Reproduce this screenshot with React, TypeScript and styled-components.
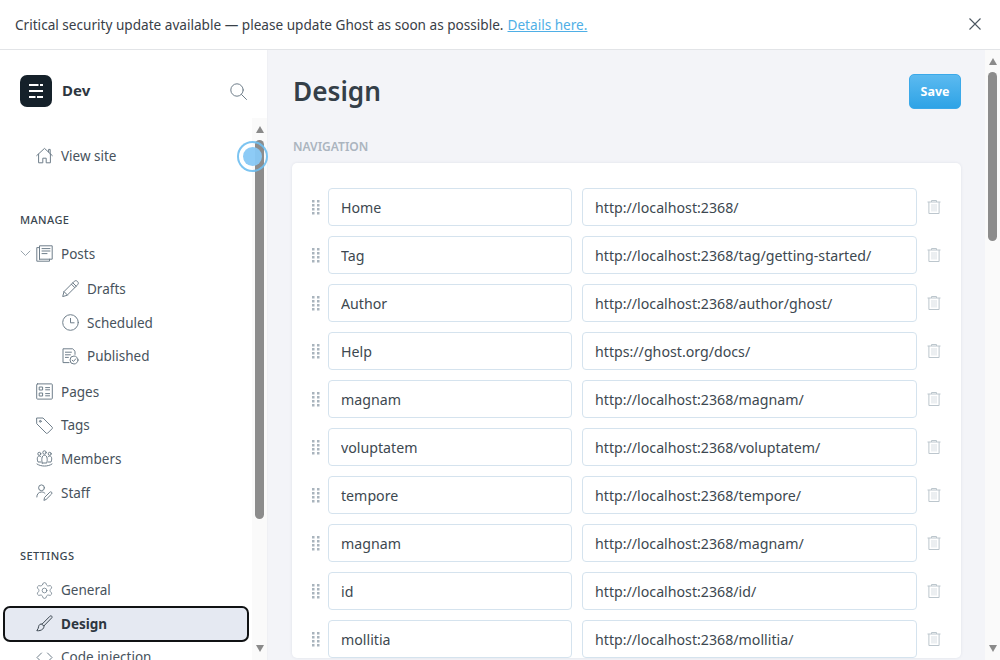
import React from 'react'
import { Settings } from 'lucide-react'
import styled, { createGlobalStyle } from 'styled-components'

const GlobalStyle = createGlobalStyle`
  html, body {
    margin: 0;
    height: 100%;
    overflow: hidden;
    background: #fff;
    font-family: 'Noto Sans', 'Open Sans', sans-serif;
    color: #394047;
  }
  * { box-sizing: border-box; }
`

const Shell = styled.div`
  display: flex;
  flex-direction: column;
  height: 660px;
  width: 1000px;
`

const Banner = styled.div`
  align-items: center;
  background: #fff;
  border-bottom: 1px solid #e2e4e7;
  display: flex;
  flex: 0 0 50px;
  font-size: 13.6px;
  justify-content: space-between;
  padding: 0 19px 1px 15px;
`

const BannerLink = styled.a`
  color: #4fafe6;
  margin-left: 4px;
  text-decoration: underline;
`

const Body = styled.div`
  display: flex;
  flex: 1;
  min-height: 0;
`

const Sidebar = styled.aside`
  background: #fff;
  border-right: 1px solid #eff0f4;
  display: flex;
  flex: 0 0 268px;
  flex-direction: column;
  min-height: 0;
  position: relative;
`

const Brand = styled.div`
  align-items: center;
  display: flex;
  flex: 0 0 68px;
  padding: 14px 20px 0;
`

const Logo = styled.div`
  align-items: center;
  background: #15212a;
  border-radius: 7px;
  display: flex;
  height: 32px;
  justify-content: center;
  width: 32px;
`

const BrandName = styled.span`
  color: #2d3640;
  flex: 1;
  font-size: 15px;
  font-weight: 700;
  margin: -2px 0 0 10px;
`

const ScrollArea = styled.div`
  display: flex;
  flex: 1;
  min-height: 0;
  min-width: 0;
  overflow: hidden;
`

const Bar = styled.div`
  background: #fafafa;
  display: flex;
  flex: 0 0 15px;
  flex-direction: column;
  height: 100%;
`

const BarButton = styled.div<{ $down?: boolean }>`
  align-items: center;
  display: flex;
  flex: 0 0 ${p => (p.$down ? 24 : 22)}px;
  justify-content: center;
  margin-top: ${p => (p.$down ? 'auto' : '0')};
  &::before {
    border-left: 4.5px solid transparent;
    border-right: 4.5px solid transparent;
    border-${p => (p.$down ? 'top' : 'bottom')}: 7px solid #8a8a8a;
    content: '';
  }
`

const BarThumb = styled.div<{ $h: number }>`
  background: #8c8c8c;
  border-radius: 5px;
  flex: 0 0 ${p => p.$h}px;
  margin: 0 3px;
`

const NavContent = styled.nav`
  flex: 1;
  min-width: 0;
  padding-top: 21px;
`

const SectionLabel = styled.div<{ $top: number }>`
  color: #3a4650;
  font-size: 11px;
  font-weight: 500;
  letter-spacing: 0.4px;
  line-height: 16px;
  margin: ${p => p.$top}px 0 9.6px 20px;
  text-transform: uppercase;
`

const Item = styled.a<{ $active?: boolean; $sub?: boolean; $gap?: number }>`
  align-items: center;
  background: ${p => (p.$active ? '#e5e9f2' : 'transparent')};
  border-radius: 5px;
  color: ${p => (p.$active ? '#2d3640' : '#47525c')};
  display: flex;
  font-size: 13.5px;
  font-weight: ${p => (p.$active ? 700 : 400)};
  height: ${p => (p.$active ? 32 : 33.6)}px;
  margin: ${p => p.$gap ?? 0}px 0 ${p => (p.$active ? 1 : 0)}px 5px;
  outline: ${p => (p.$active ? '2px solid #101214' : 'none')};
  padding-left: ${p => (p.$sub ? 57 : 31)}px;
  position: relative;
  width: 242px;
`

const ItemIcon = styled.span`
  align-items: center;
  display: flex;
  justify-content: center;
  margin-right: 8px;
  width: 17px;
  svg {
    flex: none;
  }
`

const Caret = styled.span`
  display: flex;
  left: 15px;
  position: absolute;
  top: 13px;
`

const CursorRing = styled.div`
  background: rgba(135, 200, 245, 0.95);
  background-clip: content-box;
  border: 2px solid rgba(110, 190, 240, 0.9);
  border-radius: 50%;
  height: 31px;
  left: 237px;
  padding: 4px;
  pointer-events: none;
  position: absolute;
  top: 91px;
  width: 31px;
`

const Main = styled.main`
  background: #f3f4f8;
  display: flex;
  flex: 1;
  min-width: 0;
  overflow: hidden;
`

const Page = styled.div`
  flex: 1;
  min-width: 0;
  padding: 24px 24px 0;
`

const PageHead = styled.header`
  align-items: flex-start;
  display: flex;
  justify-content: space-between;
`

const Title = styled.h1`
  color: #343f48;
  font-size: 26.2px;
  font-weight: 600;
  line-height: 34px;
  margin: 0 0 0 1px;
`

const SaveButton = styled.button`
  background: linear-gradient(#5cbaf0, #2ea3e6);
  border: 1px solid #3ba9e9;
  border-radius: 5px;
  color: #fff;
  font-family: inherit;
  font-size: 12.5px;
  font-weight: 700;
  height: 35px;
  padding: 0;
  width: 52px;
`

const CardLabel = styled.h2`
  color: #abb5bf;
  font-size: 12px;
  font-weight: 600;
  line-height: 16px;
  margin: 30px 0 8px 1px;
  text-transform: uppercase;
`

const Card = styled.section`
  background: #fff;
  border-radius: 5px;
  box-shadow: 0 0 3px rgba(40, 70, 110, 0.1);
  padding: 25px 0 0;
`

const Row = styled.div`
  align-items: center;
  display: flex;
  height: 38px;
  margin-bottom: 10px;
  padding-left: 19px;
`

const Handle = styled.span`
  display: flex;
  margin-right: 7px;
  width: 10px;
`

const Field = styled.input<{ $w: number }>`
  background: #fff;
  border: 1px solid #d5e3ee;
  border-radius: 4px;
  color: #3d4850;
  flex: 0 0 ${p => p.$w}px;
  font-family: inherit;
  font-size: 14.2px;
  height: 38px;
  margin-right: 10px;
  min-width: 0;
  outline: none;
  padding: 0 12px;
`

const Trash = styled.span`
  display: flex;
  height: 14px;
`

const stroke = { fill: 'none', stroke: '#6f7e8a', strokeWidth: 1, strokeLinecap: 'round', strokeLinejoin: 'round' } as const

const icons: Record<string, React.ReactNode> = {
  home: (
    <svg width="17" height="17" viewBox="0 0 17 17" {...stroke}>
      <path d="M.7 8.6 8.5 1.4l7.8 7.2M2.6 7.2v8.6h4.2v-4.6h3.400v4.600h4.200V7.200M12.600 5V2.400h1.600v4.500" />
    </svg>
  ),
  posts: (
    <svg width="17" height="17" viewBox="0 0 17 17" {...stroke}>
      <path d="M3.500 14.200V.8h12.700v13.400H3.500zM3.500 2.600H.8v13.600h12.700v-2M6 3.600h8M6 6h8M6 8.600h5" />
    </svg>
  ),
  pencil: (
    <svg width="17" height="17" viewBox="0 0 17 17" {...stroke}>
      <path d="m.8 16.200 1.200-4.600L12.400 1.200c.8-.7 2-.7 2.800 0l.6.6c.7.8.7 2 0 2.800L5.400 15zM2 11.600 5.400 15M10.800 2.800l3.400 3.400M9.400 4.200l3.400 3.400" />
    </svg>
  ),
  clock: (
    <svg width="17" height="17" viewBox="0 0 17 17" {...stroke}>
      <circle cx="8.500" cy="8.500" r="7.800" />
      <path d="M8.500 4.400v4.400h3.600" />
    </svg>
  ),
  published: (
    <svg width="17" height="17" viewBox="0 0 17 17" {...stroke}>
      <path d="M7 14.600H1V.8h9.600l2.400 2.400v3.200M3.400 4.200h6M3.400 6.800h5M3.400 9.400h3" />
      <circle cx="12" cy="12" r="4" />
      <path d="m10.200 12.200 1.300 1.200 2.300-2.600" />
    </svg>
  ),
  pages: (
    <svg width="17" height="17" viewBox="0 0 17 17" {...stroke}>
      <rect x=".7" y=".9" width="15.600" height="15.200" rx=".8" />
      <path d="M3.600 4h3v3h-3zM3.600 10h3v3h-3zM9.600 4.600h4M9.600 6.800h4M9.600 10.600h4M9.600 12.800h4" />
    </svg>
  ),
  tag: (
    <svg width="17" height="17" viewBox="0 0 17 17" {...stroke}>
      <path d="M1 1h6l9.200 9.200c.4.4.4 1 0 1.400l-4.600 4.600c-.4.4-1 .4-1.400 0L1 7z" />
      <circle cx="4.300" cy="4.300" r=".9" />
    </svg>
  ),
  members: (
    <svg width="17" height="17" viewBox="0 0 17 17" {...stroke}>
      <circle cx="8.500" cy="2.500" r="1.700" />
      <circle cx="3.300" cy="3.800" r="1.500" />
      <circle cx="13.700" cy="3.800" r="1.500" />
      <path d="M6.200 13c-.7-2.600-.8-7.800 2.300-7.800s3 5.200 2.300 7.800H6.200zM4.600 12H2c-1-2.200-1.200-6 1.300-6 .7 0 1.300.3 1.600.8M12.400 12H15c1-2.200 1.200-6-1.300-6-.7 0-1.300.3-1.600.8M1 14c4 2.800 11 2.800 15 0" />
    </svg>
  ),
  staff: (
    <svg width="17" height="17" viewBox="0 0 17 17" {...stroke}>
      <circle cx="5.500" cy="3.800" r="2.900" />
      <path d="M.8 13c0-3 2-5 4.700-5 1.500 0 2.700.5 3.500 1.400M8 16l.6-2.600 5.200-5.200c.5-.5 1.300-.5 1.800 0s.5 1.300 0 1.800l-5.200 5.200z" />
    </svg>
  ),
  gear: <Settings size={19} strokeWidth={1} color="#6f7e8a" />,
  brush: (
    <svg width="17" height="17" viewBox="0 0 17 17" {...stroke} stroke="#3b4650">
      <path d="M6.200 9 14 1.200c.6-.6 1.300-.5 1.700 0 .5.500.5 1.200 0 1.700L8 10.800zM6.200 9c-1.800-.4-3.200.6-3.500 2.300-.2 1.500-.8 3.200-1.900 4.400 2 .3 4.600-.3 6-1.700 1-1 1.400-2.400 1.200-3.200" />
    </svg>
  ),
  code: (
    <svg width="17" height="17" viewBox="0 0 17 17" {...stroke}>
      <path d="M5.500 4 1 8.500 5.500 13M11.500 4l4.500 4.500-4.500 4.500" />
    </svg>
  ),
}

type NavEntry = { label: string; icon: string; sub?: boolean; active?: boolean; caret?: boolean; gap?: number }

const manageItems: NavEntry[] = [
  { label: 'Posts', icon: 'posts', caret: true },
  { label: 'Drafts', icon: 'pencil', sub: true, gap: 1.4 },
  { label: 'Scheduled', icon: 'clock', sub: true },
  { label: 'Published', icon: 'published', sub: true },
  { label: 'Pages', icon: 'pages', gap: 2 },
  { label: 'Tags', icon: 'tag' },
  { label: 'Members', icon: 'members' },
  { label: 'Staff', icon: 'staff' },
]

const settingsItems: NavEntry[] = [
  { label: 'General', icon: 'gear' },
  { label: 'Design', icon: 'brush', active: true, gap: 0.3 },
  { label: 'Code injection', icon: 'code', gap: 0.5 },
]

const navRows = [
  ['Home', 'http://localhost:2368/'],
  ['Tag', 'http://localhost:2368/tag/getting-started/'],
  ['Author', 'http://localhost:2368/author/ghost/'],
  ['Help', 'https://ghost.org/docs/'],
  ['magnam', 'http://localhost:2368/magnam/'],
  ['voluptatem', 'http://localhost:2368/voluptatem/'],
  ['tempore', 'http://localhost:2368/tempore/'],
  ['magnam', 'http://localhost:2368/magnam/'],
  ['id', 'http://localhost:2368/id/'],
  ['mollitia', 'http://localhost:2368/mollitia/'],
]

const NavItem = ({ item }: { item: NavEntry }) => (
  <Item $sub={item.sub} $active={item.active} $gap={item.gap}>
    {item.caret && (
      <Caret>
        <svg width="11" height="7" viewBox="0 0 11 7" fill="none" stroke="#9aa5ae">
          <path d="m.8.8 4.700 4.700L10.200.8" />
        </svg>
      </Caret>
    )}
    <ItemIcon>{icons[item.icon]}</ItemIcon>
    {item.label}
  </Item>
)

const ScrollBar = ({ thumb }: { thumb: number }) => (
  <Bar>
    <BarButton />
    <BarThumb $h={thumb} />
    <BarButton $down />
  </Bar>
)

const DragHandle = () => (
  <Handle>
    <svg width="10" height="17" viewBox="0 0 10 17" fill="#a9b4bd">
      {[0, 4, 8, 12].map(y => (
        <React.Fragment key={y}>
          <rect x="1" y={y + 1} width="2.500" height="2.500" />
          <rect x="6" y={y + 1} width="2.500" height="2.500" />
        </React.Fragment>
      ))}
    </svg>
  </Handle>
)

const TrashIcon = () => (
  <Trash>
    <svg width="14" height="14" viewBox="0 0 14 14" fill="none" stroke="#bcc6cd">
      <path d="M.5 2h13M4.500 2V.5h5V2M1.900 2v11.500h10.200V2" />
      <path d="M5 4v7.500M7 4v7.500M9 4v7.500" stroke="#d8dee3" />
    </svg>
  </Trash>
)

const App = () => (
  <Shell>
    <GlobalStyle />
    <Banner>
      <span>
        Critical security update available — please update Ghost as soon as possible.
        <BannerLink>Details here.</BannerLink>
      </span>
      <svg width="12" height="12" viewBox="0 0 12 12" fill="none" stroke="#4b5660" strokeWidth="1.100">
        <path d="m.5.5 11 11M11.500.5l-11 11" />
      </svg>
    </Banner>
    <Body>
      <Sidebar>
        <Brand>
          <Logo>
            <svg width="14" height="14" viewBox="0 0 14 14" fill="#fff">
              <path d="M0 0h9.500v2H0zM11 0h3v2h-3zM0 6h14v2H0zM0 12h6.500v2H0zM8 12h6v2H8z" />
            </svg>
          </Logo>
          <BrandName>Dev</BrandName>
          <svg width="17" height="17" viewBox="0 0 17 17" {...stroke}>
            <circle cx="7" cy="7" r="6.200" />
            <path d="m11.500 11.500 5 5" />
          </svg>
        </Brand>
        <ScrollArea>
          <NavContent>
            <NavItem item={{ label: 'View site', icon: 'home' }} />
            <SectionLabel $top={39}>Manage</SectionLabel>
            {manageItems.map(item => (
              <NavItem key={item.label} item={item} />
            ))}
            <SectionLabel $top={38.7}>Settings</SectionLabel>
            {settingsItems.map(item => (
              <NavItem key={item.label} item={item} />
            ))}
          </NavContent>
          <ScrollBar thumb={379} />
        </ScrollArea>
        <CursorRing />
      </Sidebar>
      <Main>
        <Page>
          <PageHead>
            <Title>Design</Title>
            <SaveButton>Save</SaveButton>
          </PageHead>
          <CardLabel>Navigation</CardLabel>
          <Card>
            {navRows.map(([label, url], i) => (
              <Row key={i}>
                <DragHandle />
                <Field $w={244} value={label} readOnly />
                <Field $w={335} value={url} readOnly />
                <TrashIcon />
              </Row>
            ))}
          </Card>
        </Page>
        <ScrollBar thumb={169} />
      </Main>
    </Body>
  </Shell>
)

export default App
